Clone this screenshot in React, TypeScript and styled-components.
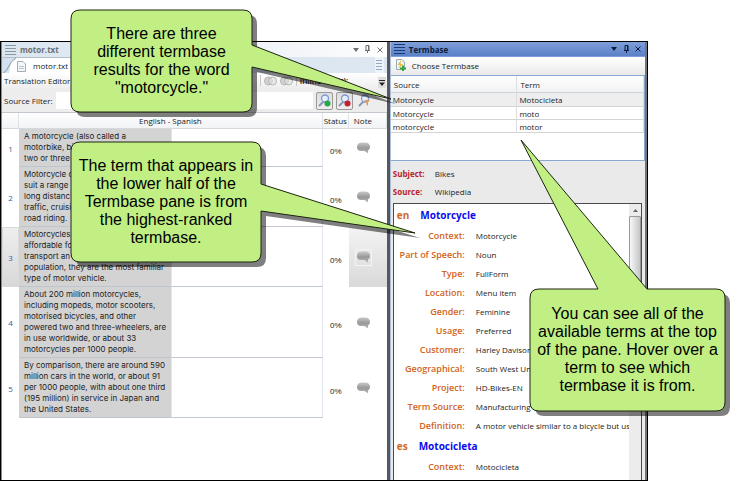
import React from 'react';
import styled, { createGlobalStyle, css } from 'styled-components';

const UI = '"Open Sans", "Noto Sans", sans-serif';

const GlobalStyle = createGlobalStyle`
  * { box-sizing: border-box; }
  body { margin: 0; background: #fff; font: 8px/11px ${UI}; color: #222; overflow: hidden; }
  button, input { font: inherit; color: inherit; margin: 0; padding: 0; }
  button { border: 0; background: none; display: inline-flex; align-items: center; justify-content: center; }
  table { border-collapse: separate; border-spacing: 0; table-layout: fixed; width: 100%; }
  th, td { padding: 0; font-weight: 400; text-align: left; }
`;

const Page = styled.main`
  position: relative;
  min-height: 100vh;
  padding: 41px 92px 0 0;
  display: flex;
`;

const Window = styled.div`
  flex: 1;
  display: grid;
  grid-template-columns: minmax(0, 3fr) 3px minmax(0, 2fr);
  min-width: 0;
  border: 1px solid #000;
  background: #fff;
`;

const EditorPane = styled.section`
  display: flex;
  flex-direction: column;
  border-left: 1px solid #8b8b8b;
`;

const Splitter = styled.div`
  background: #56585c;
`;

const TermPane = styled.section`
  display: flex;
  flex-direction: column;
  background: #eaeaea;
  border-left: 1px solid #a9bfdc;
  border-right: 2px solid #70757c;
`;

const TitleBar = styled.header<{ $active?: boolean }>`
  height: 15px;
  display: flex;
  align-items: center;
  gap: 4px;
  padding: 0 3px;
  font-weight: 600;
  ${({ $active }) =>
    $active
      ? css`background: linear-gradient(#7f9fd9, #5a80c7); border-bottom: 1px solid #7d9ddb; color: #0c1c3c;`
      : css`background: linear-gradient(90deg, #d9e5f0, #f4f6f9 80%, #fff); color: #6c6f74;`}
`;

const Title = styled.h2`
  flex: 1;
  margin: 0;
  font: inherit;
  font-weight: 700;
`;

const WindowButtons = styled.div`
  display: flex;
  gap: 4px;
`;

const WindowButton = styled.button`
  width: 8px;
  height: 10px;
`;

const TabStrip = styled.nav`
  height: 16px;
  display: flex;
  justify-content: space-between;
  align-items: stretch;
  background: linear-gradient(90deg, #d3e1ef, #dfe8f1);
`;

const Tab = styled.button`
  padding-right: 8px;
  gap: 5px;
  border-top: 1px solid #b4bcc6;
  background: linear-gradient(100deg, #d3e1ef 9px, #fff 10px);
`;

const TabIcons = styled.span`
  display: flex;
`;

const TabMenu = styled.button`
  width: 9px;
  margin-right: 3px;
  background: #eef3f8;
`;

const EditorTools = styled.div`
  height: 17px;
  display: flex;
  align-items: center;
  gap: 3px;
  padding: 0 1px 2px 2px;
  background: linear-gradient(#fff, #ececec);
`;

const ToolName = styled.span`
  flex: 1;
`;

const ToolLabel = styled.span`
  width: 75px;
  font-weight: 600;
  white-space: nowrap;
`;

const ToolSeparator = styled.i`
  width: 1px;
  height: 11px;
  background: #c8c8c8;
`;

const ToolIcon = styled.button`
  height: 13px;
`;

const Overflow = styled.button`
  width: 8px;
  height: 11px;
  align-self: flex-end;
  background: #dedede;
`;

const FilterBar = styled.div`
  height: 23px;
  display: flex;
  align-items: center;
  gap: 3px;
  padding: 0 14px 1px 2px;
  background: #ededed;
  border-bottom: 1px solid #c3c6cc;
`;

const FilterInput = styled.input`
  flex: 1;
  min-width: 0;
  height: 17px;
  border: 0;
  background: #fff;
`;

const FilterButton = styled.button<{ $on?: boolean }>`
  width: 17px;
  height: 18px;
  ${({ $on }) => $on && css`border: 1px solid #999; border-radius: 2px; background: linear-gradient(#ddd, #efefef);`}
`;

const Num = styled.col`width: 17px;`;
const SourceCol = styled.col`width: 50%;`;
const StatusCol = styled.col`width: 26px;`;
const NoteCol = styled.col`width: 38px;`;

const GridHead = styled.th<{ $left?: boolean }>`
  height: 16px;
  && { text-align: ${({ $left }) => ($left ? 'left' : 'center')}; }
  padding-left: ${({ $left }) => ($left ? '5px' : '0')};
  padding-bottom: 1px;
  background: linear-gradient(#fff, #f2f3f5);
  border-right: 1px solid #dfe3e8;
  border-bottom: 1px solid #d5d8dd;
`;

const NumCell = styled.th<{ $current?: boolean }>`
  && { text-align: center; }
  color: #3b5a9c;
  ${({ $current }) => $current && css`background: linear-gradient(#eee, #d8d8d8); border: 1px solid #d9d9d9;`}
`;

const SourceCell = styled.td`
  background: #d3d3d3;
  padding: 2px 0 2px 5px;
  border-bottom: 1px solid #bfc5cd;
  font: 8px/11px Inter, "Liberation Sans", sans-serif;
  white-space: nowrap;
`;

const TargetCell = styled.td`
  border: 1px solid #e0e5ee;
  border-width: 0 1px 1px;
  border-bottom-color: #c1c8d2;
`;

const StatusCell = styled.td`
  && { text-align: center; padding-top: 6px; }
  font-family: "Liberation Sans", sans-serif;
`;

const NoteCell = styled.td<{ $current?: boolean }>`
  padding-left: 6px;
  ${({ $current }) => $current && css`background: linear-gradient(#f3f3f3, #d9d9d9);`}
`;

const NoteButton = styled.button<{ $current?: boolean }>`
  width: 17px;
  height: 17px;
  vertical-align: middle;
  border: 1px solid ${({ $current }) => ($current ? '#f4f4f4' : 'transparent')};
`;

const TermTools = styled.div`
  height: 18px;
  display: flex;
  align-items: center;
  padding: 0 0 2px 4px;
  background: linear-gradient(#fff, #e9e9e9);
`;

const ChooseButton = styled.button`
  gap: 6px;
`;

const Results = styled.div`
  height: 86px;
  background: #fff;
  border: 1px solid #87a9cf;
  border-left: 0;
`;

const ResultHead = styled.th`
  height: 17px;
  && { padding-left: 3px; }
  background: linear-gradient(#fff, #f1f2f4);
  border-right: 1px solid #dcdfe3;
  border-bottom: 1px solid #d0d3d7;
`;

const ResultCell = styled.td<{ $selected?: boolean }>`
  height: ${({ $selected }) => ($selected ? '14px' : '13px')};
  && { padding-left: 2px; }
  background: ${({ $selected }) => ($selected ? '#eee' : '#fff')};
  border-right: 1px solid #ddd;
  border-bottom: 1px solid #d4d4d4;
`;

const Facts = styled.dl`
  margin: 0;
  padding: 3px 2px;
  display: grid;
  grid-template-columns: 42px 1fr;
  grid-auto-rows: 18px;
  align-items: center;
`;

const FactName = styled.dt`
  font-weight: 700;
  color: #b8232b;
`;

const Value = styled.dd`
  margin: 0;
  white-space: nowrap;
`;

const Entry = styled.div`
  flex: 1;
  display: flex;
  margin: 0 3px 0 2px;
  border: 1px solid #4b4b4b;
  border-bottom: 0;
  background: #fff;
`;

const EntryBody = styled.div`
  flex: 1;
  min-width: 0;
  overflow: hidden;
  padding-left: 3px;
`;

const EntryHeading = styled.h3`
  margin: 0;
  height: 22px;
  display: flex;
  align-items: center;
  gap: 11px;
  font: 700 10px/14px ${UI};
`;

const Language = styled.span`color: #d2691e;`;
const TermWord = styled.span`color: #0b0bf0;`;

const Attributes = styled.dl`
  margin: 0;
  display: grid;
  grid-template-columns: 68px 1fr;
  column-gap: 11px;
  grid-auto-rows: 19px;
  align-items: center;
`;

const AttributeName = styled.dt`
  text-align: right;
  font-weight: 600;
  font-size: 9px;
  color: #d2641c;
  white-space: nowrap;
`;

const ScrollTrack = styled.div`
  width: 12px;
  display: flex;
  flex-direction: column;
  background: #ececec;
`;

const ScrollUp = styled.button`
  height: 12px;
`;

const ScrollThumb = styled.div`
  height: 100px;
  border: 1px solid #999;
  border-radius: 1px;
  background: linear-gradient(90deg, #f7f7f7, #c4c6c8);
`;

const Callout = styled.aside<{ $x: number; $y: number; $w: number; $h: number }>`
  position: absolute;
  left: ${({ $x }) => $x}px;
  top: ${({ $y }) => $y}px;
  width: ${({ $w }) => $w}px;
  height: ${({ $h }) => $h}px;
  display: flex;
  align-items: center;
  justify-content: center;
`;

const Bubble = styled.svg`
  position: absolute;
  inset: 0;
  overflow: visible;
`;

const CalloutText = styled.p`
  position: relative;
  margin: 0;
  text-align: center;
  white-space: pre-line;
  font: 16px/18px "Liberation Sans", Arial, sans-serif;
  color: #000;
`;

const bubblePath = (w: number, h: number, side: 'right' | 'top', from: number, to: number, tip: string) => {
  const r = 9;
  const top = side === 'top' ? `H${from} L${tip} L${to} 0` : '';
  const right = side === 'right' ? `V${from} L${tip} L${w} ${to}` : '';
  return `M${r} 0 ${top} H${w - r} Q${w} 0 ${w} ${r} ${right} V${h - r} Q${w} ${h} ${w - r} ${h} H${r} Q0 ${h} 0 ${h - r} V${r} Q0 0 ${r} 0Z`;
};

interface NoteProps {
  x: number; y: number; w: number; h: number;
  side: 'right' | 'top'; from: number; to: number; tip: string;
  text: string;
}

const Note = ({ x, y, w, h, side, from, to, tip, text }: NoteProps) => {
  const d = bubblePath(w, h, side, from, to, tip);
  const shadow = side === 'top' ? bubblePath(w, h, side, from, from, `${from} 0`) : d;
  return (
    <Callout $x={x} $y={y} $w={w} $h={h}>
      <Bubble aria-hidden="true" width={w} height={h}>
        <path d={shadow} transform="translate(5 5)" fill="#000" fillOpacity=".5" />
        <path d={d} fill="#c1ef84" stroke="#1c2410" strokeWidth="1" />
      </Bubble>
      <CalloutText>{text}</CalloutText>
    </Callout>
  );
};

const Lines = ({ color, w = 11 }: { color: string; w?: number }) => (
  <svg width={w} height="10" stroke={color}>
    <path d={`M0 .5H${w}M0 3.5H${w}M0 6.5H${w}M0 9.5H${w}`} />
  </svg>
);

const Caption = () => (
  <WindowButtons>
    <WindowButton aria-label="Menu"><svg width="6" height="4"><path d="M0 0H6L3 4Z" fill="currentColor" /></svg></WindowButton>
    <WindowButton aria-label="Pin"><svg width="7" height="9" fill="none" stroke="currentColor"><path d="M2 5V.5H5V5M4.5 1V5M1 5.5H6M3.5 6V8" /></svg></WindowButton>
    <WindowButton aria-label="Close"><svg width="6" height="6" stroke="currentColor"><path d="M.5 .5L5.5 5.5M5.5 .5L.5 5.5" /></svg></WindowButton>
  </WindowButtons>
);

const Magnifier = ({ dot }: { dot?: string }) => (
  <svg width="13" height="13" fill="none">
    <path d="M5 8L1.5 11.5" stroke="#8b97b5" strokeWidth="2" strokeLinecap="round" />
    <circle cx="7" cy="4.5" r="3.5" fill="#e3efff" stroke="#7f98cb" strokeWidth="1.3" />
    {dot ? <circle cx="9.5" cy="9.5" r="3" fill={dot} /> : <path d="M6 6H12L10 8.5V12L8.5 10.5V8.5Z" fill="#e59a4c" />}
  </svg>
);

const Circles = () => (
  <svg width="13" height="10">
    <circle cx="4.5" cy="5" r="4" fill="#d2d2d2" stroke="#b5b5b5" />
    <circle cx="8.5" cy="5" r="4" fill="#e3e3e3" fillOpacity=".6" stroke="#b5b5b5" />
  </svg>
);

const Speech = () => (
  <svg width="13" height="12">
    <defs>
      <linearGradient id="speech" x2="0" y2="1"><stop stopColor="#c9c9c9" /><stop offset=".5" stopColor="#989898" /><stop offset="1" stopColor="#b9b9b9" /></linearGradient>
    </defs>
    <path d="M4 .5H9Q13 1 13 5Q13 8 11 8.500L11 11.5L7.5 9H4Q0 9 0 5Q0 1 4 .5Z" fill="url(#speech)" />
  </svg>
);

const segments = [
  ['A motorcycle (also called a', 'motorbike, bi', 'two or three'],
  ['Motorcycle d', 'suit a range', 'long distanc', 'traffic, cruisi', 'road riding.'],
  ['Motorcycles', 'affordable fo', 'transport an', 'population, they are the most familiar', 'type of motor vehicle.'],
  ['About 200 million motorcycles,', 'including mopeds, motor scooters,', 'motorised bicycles, and other', 'powered two and three-wheelers, are', 'in use worldwide, or about 33', 'motorcycles per 1000 people.'],
  ['By comparison, there are around 590', 'million cars in the world, or about 91', 'per 1000 people, with about one third', '(195 million) in service in Japan and', 'the United States.'],
];

const results = [['Motorcycle', 'Motocicleta'], ['Motorcycle', 'moto'], ['motorcycle', 'motor']];

const attributes = [
  ['Context:', 'Motorcycle'], ['Part of Speech:', 'Noun'], ['Type:', 'FullForm'], ['Location:', 'Menu item'],
  ['Gender:', 'Feminine'], ['Usage:', 'Preferred'], ['Customer:', 'Harley Davison'], ['Geographical:', 'South West Un'],
  ['Project:', 'HD-Bikes-EN'], ['Term Source:', 'Manufacturing'], ['Definition:', 'A motor vehicle similar to a bicycle but us'],
];

const AttributeList = ({ items }: { items: string[][] }) => (
  <Attributes>
    {items.map(([name, value]) => (
      <React.Fragment key={name}>
        <AttributeName>{name}</AttributeName>
        <Value>{value}</Value>
      </React.Fragment>
    ))}
  </Attributes>
);

export default function App() {
  return (
    <Page>
      <GlobalStyle />
      <Window>
        <EditorPane>
          <TitleBar><Lines color="#8f969e" /><Title>motor.txt</Title><Caption /></TitleBar>
          <TabStrip>
            <Tab>
              <TabIcons>
                <svg width="26" height="16" fill="none">
                  <path d="M0 0H14Q9 3 7 8Q5 13 0 16Z" fill="#d3e1ef" />
                  <path d="M14 0Q9 3 7 8Q5 13 0 16" stroke="#8d99a6" />
                  <path d="M15.5 3.5H21L23.5 6V13.5H15.5Z" fill="#f4f7f9" stroke="#a3adb5" />
                  <path d="M17 8.500H22M17 10.500H22" stroke="#bcc6cc" />
                </svg>
              </TabIcons>
              motor.txt
            </Tab>
            <TabMenu aria-label="Tabs"><Lines color="#8fa9c8" w={6} /></TabMenu>
          </TabStrip>
          <EditorTools>
            <ToolName>Translation Editor</ToolName>
            <ToolSeparator />
            <ToolIcon aria-label="Merge"><Circles /></ToolIcon>
            <ToolIcon aria-label="Split"><Circles /></ToolIcon>
            <ToolSeparator />
            <ToolLabel>Inline Tag(s):</ToolLabel>
            <Overflow aria-label="More"><svg width="6" height="6"><path d="M0 .5H6" stroke="#222" /><path d="M0 2.5H6L3 6Z" fill="#222" /></svg></Overflow>
          </EditorTools>
          <FilterBar>
            <label htmlFor="filter">Source Filter:</label>
            <FilterInput id="filter" />
            <FilterButton $on aria-label="Apply"><Magnifier dot="#28a745" /></FilterButton>
            <FilterButton $on aria-label="Clear"><Magnifier dot="#c3202b" /></FilterButton>
            <FilterButton aria-label="Options"><Magnifier /></FilterButton>
          </FilterBar>
          <table>
            <colgroup><Num /><col /><col /><StatusCol /><NoteCol /></colgroup>
            <thead>
              <tr>
                <GridHead />
                <GridHead colSpan={2}>English - Spanish</GridHead>
                <GridHead>Status</GridHead>
                <GridHead $left>Note</GridHead>
              </tr>
            </thead>
            <tbody>
              {segments.map((lines, i) => (
                <tr key={i}>
                  <NumCell scope="row" $current={i === 2}>{i + 1}</NumCell>
                  <SourceCell>{lines.map((line) => <React.Fragment key={line}>{line}<br /></React.Fragment>)}</SourceCell>
                  <TargetCell />
                  <StatusCell>0%</StatusCell>
                  <NoteCell $current={i === 2}><NoteButton aria-label="Note" $current={i === 2}><Speech /></NoteButton></NoteCell>
                </tr>
              ))}
            </tbody>
          </table>
        </EditorPane>
        <Splitter />
        <TermPane>
          <TitleBar $active><Lines color="#173a78" /><Title>Termbase</Title><Caption /></TitleBar>
          <TermTools>
            <ChooseButton>
              <svg width="11" height="12">
                <path d="M1.5 .5H7L9.5 3V10.5H1.5Z" fill="#eef5f7" stroke="#9aacb4" />
                <path d="M6 1L2.5 6H5L3.5 10L8 5H5.5Z" fill="#edbd2e" />
                <path d="M8 6.5V12M5 9.5H11" stroke="#31a63d" strokeWidth="2" />
              </svg>
              Choose Termbase
            </ChooseButton>
          </TermTools>
          <Results>
            <table>
              <thead><tr><ResultHead>Source</ResultHead><ResultHead>Term</ResultHead></tr></thead>
              <tbody>
                {results.map(([source, term], i) => (
                  <tr key={term}><ResultCell $selected={i === 0}>{source}</ResultCell><ResultCell $selected={i === 0}>{term}</ResultCell></tr>
                ))}
              </tbody>
            </table>
          </Results>
          <Facts>
            <FactName>Subject:</FactName><Value>Bikes</Value>
            <FactName>Source:</FactName><Value>Wikipedia</Value>
          </Facts>
          <Entry>
            <EntryBody>
              <EntryHeading><Language>en</Language><TermWord>Motorcycle</TermWord></EntryHeading>
              <AttributeList items={attributes} />
              <EntryHeading><Language>es</Language><TermWord>Motocicleta</TermWord></EntryHeading>
              <AttributeList items={[['Context:', 'Motocicleta']]} />
            </EntryBody>
            <ScrollTrack>
              <ScrollUp aria-label="Scroll up"><svg width="5" height="3"><path d="M0 3H5L2.5 0Z" fill="#666" /></svg></ScrollUp>
              <ScrollThumb />
            </ScrollTrack>
          </Entry>
        </TermPane>
      </Window>
      <Note x={71} y={10} w={181} h={102} side="right" from={35} to={57} tip="320 89"
        text={'There are three\ndifferent termbase\nresults for the word\n"motorcycle."'} />
      <Note x={71} y={142} w={190} h={120} side="right" from={42} to={69} tip="344 91"
        text={'The term that appears in\nthe lower half of the\nTermbase pane is from\nthe highest-ranked\ntermbase.'} />
      <Note x={530} y={289} w={195} h={122} side="top" from={68} to={117} tip="-9 -149"
        text={'You can see all of the\navailable terms at the top\nof the pane. Hover over a\nterm to see which\ntermbase it is from.'} />
    </Page>
  );
}
